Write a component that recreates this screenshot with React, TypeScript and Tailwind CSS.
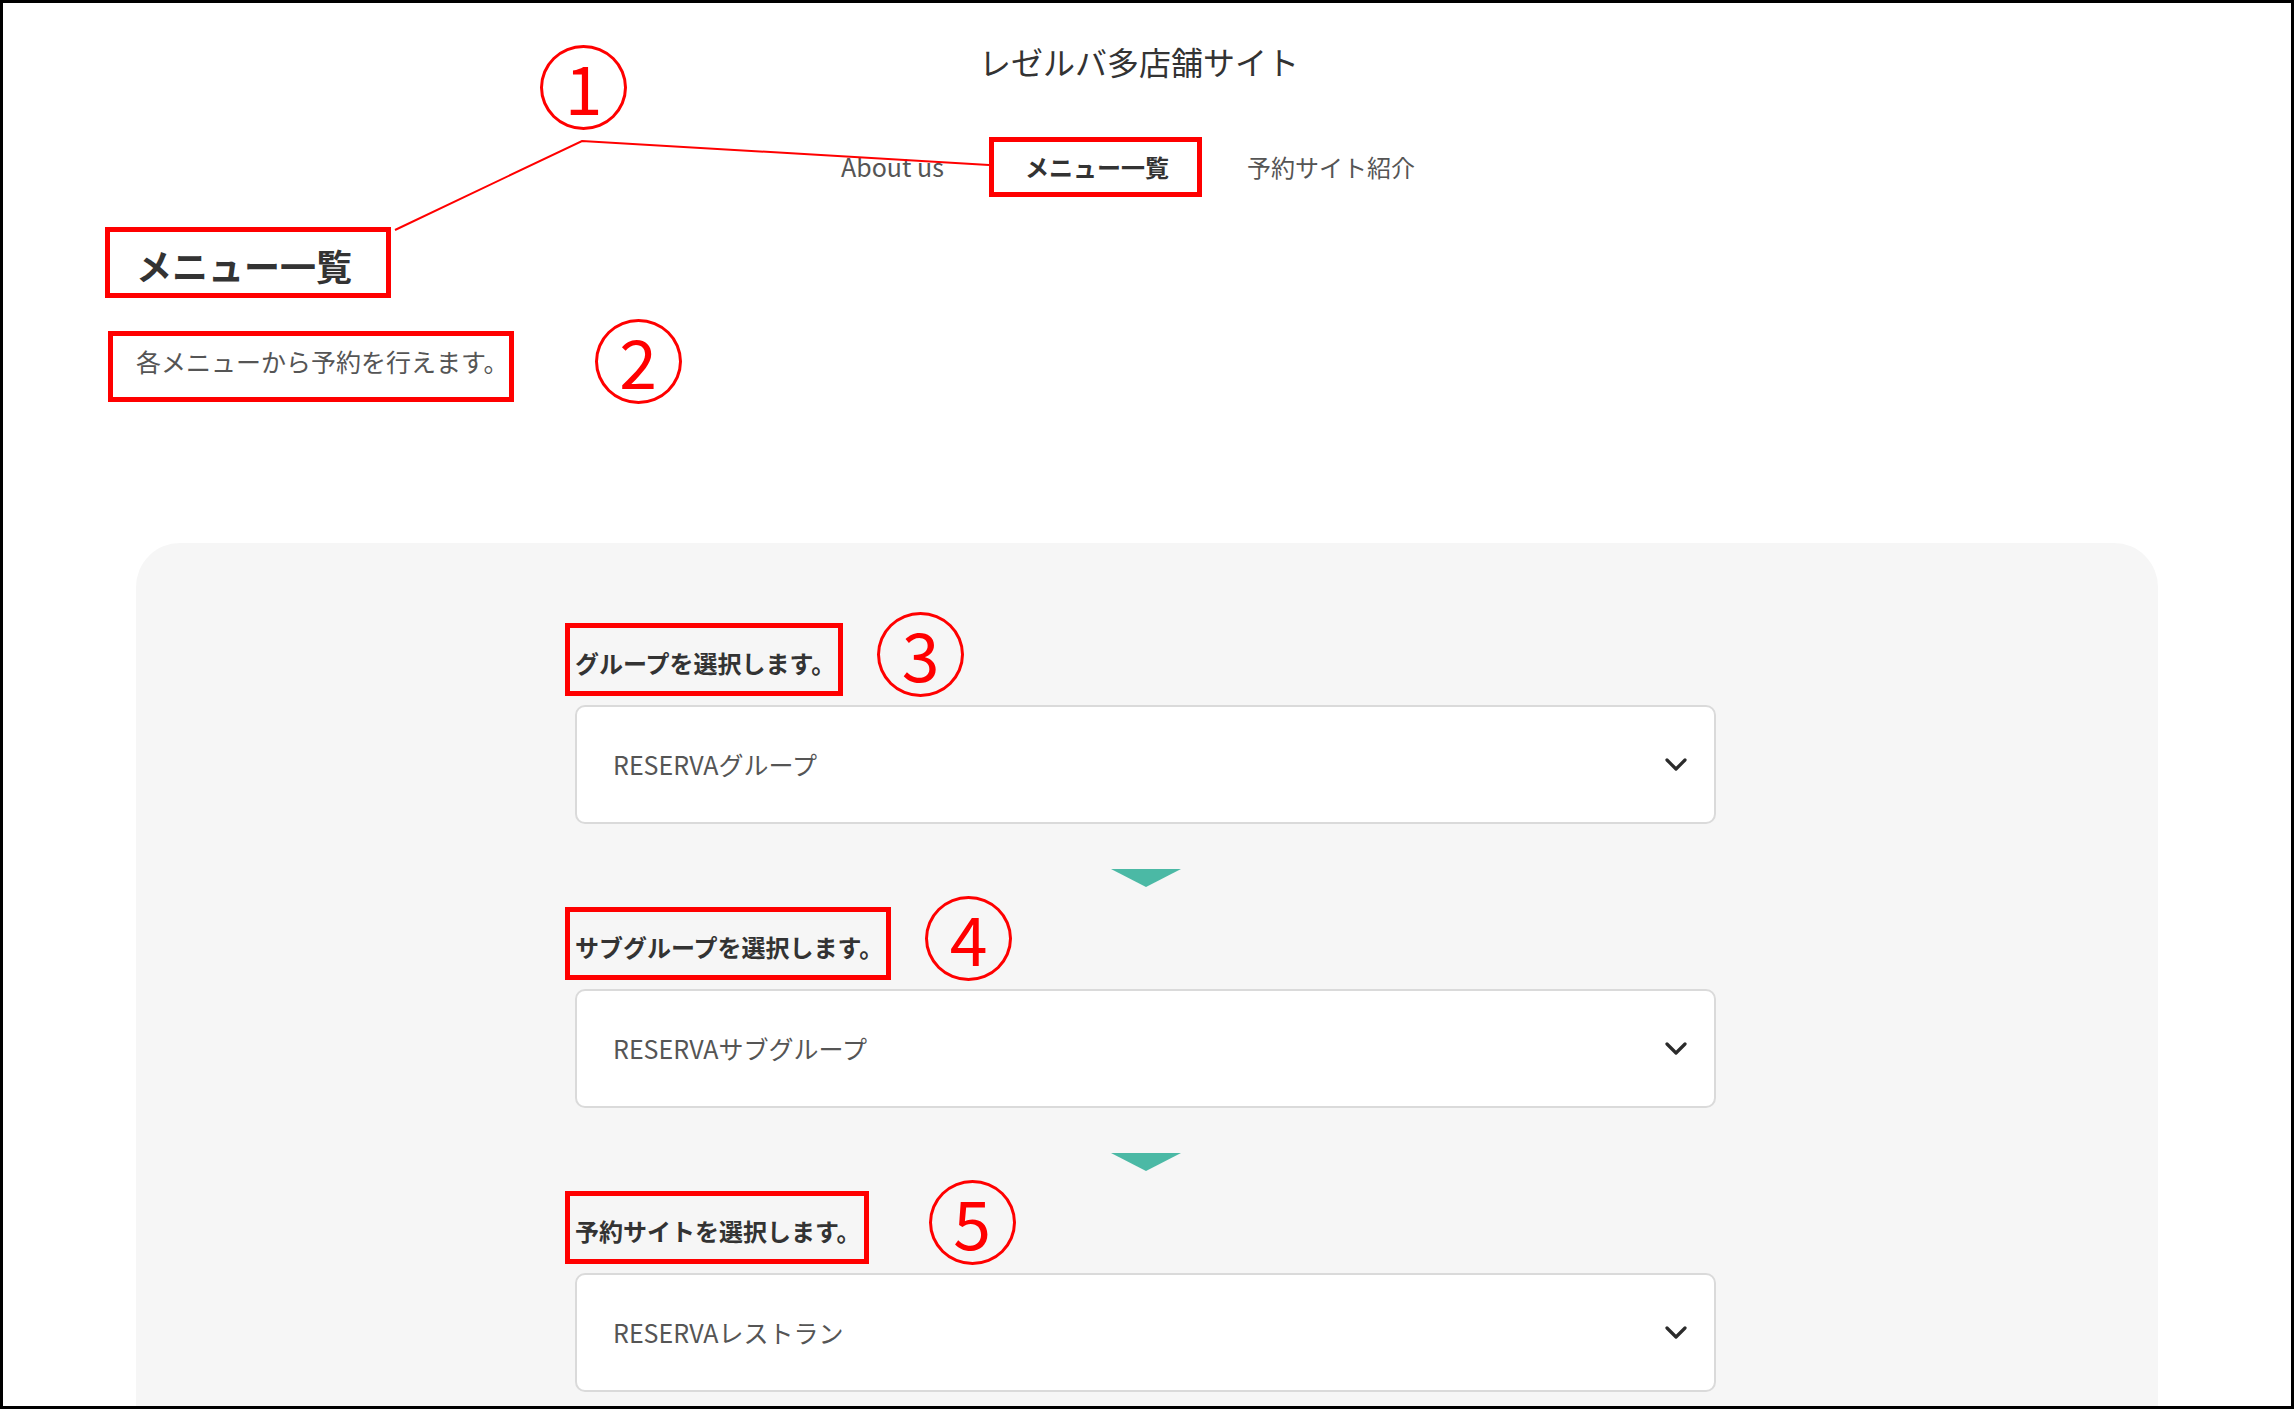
import React from 'react';

// Step rows inside the gray selection panel
const steps = [
    { label: 'グループを選択します。', value: 'RESERVAグループ', no: '3', gap: 'ml-[34px]' },
    { label: 'サブグループを選択します。', value: 'RESERVAサブグループ', no: '4', gap: 'ml-[34px]' },
    { label: '予約サイトを選択します。', value: 'RESERVAレストラン', no: '5', gap: 'ml-[60px]' },
];

// Hand-drawn style circled number used as a callout marker
const Circled = ({ n, className = '' }: { n: string; className?: string }) => (
    <div
        className={`flex h-[85px] w-[87px] shrink-0 items-center justify-center rounded-[50%] border-[3px] border-[#ff0000] text-[68px] leading-none text-[#ff0000] ${className}`}
    >
        <span className="-mt-[4px]">{n}</span>
    </div>
);

const Chevron = () => (
    <svg width="22" height="14" viewBox="0 0 22 14" fill="none">
        <polyline points="2,2 11,11 20,2" stroke="#2b2b2b" strokeWidth="3.2" strokeLinecap="round" strokeLinejoin="round" />
    </svg>
);

const Step = ({ label, value, no, gap, last }: { label: string; value: string; no: string; gap: string; last: boolean }) => (
    <div className="flex flex-col">
        <div className="flex items-center">
            <div className="-ml-[10px] flex h-[73px] items-center border-[5px] border-[#ff0000] pl-[5px] pr-[3px] pt-[6px]">
                <span className="text-[24px] font-bold leading-none text-[#333]">{label}</span>
            </div>
            <Circled n={no} className={`${gap} -my-[6px] -translate-y-[5px]`} />
        </div>
        <div className="mt-[9px] flex h-[119px] w-full items-center justify-between rounded-[10px] border-2 border-[#dadada] bg-white pl-[36px] pr-[27px]">
            <span className="text-[25px] leading-none text-[#555]">{value}</span>
            <Chevron />
        </div>
        {!last && (
            <div className="mx-auto mb-[20px] mt-[45px] h-0 w-0 border-l-[35px] border-r-[35px] border-t-[18px] border-l-transparent border-r-transparent border-t-[#4bb9a5]" />
        )}
    </div>
);

const App = () => {
    return (
        <div className="relative h-[1409px] w-[2294px] overflow-hidden border-[3px] border-black bg-white font-['Noto_Sans_CJK_JP',sans-serif]">
            {/* header */}
            <div className="pr-[16px] pt-[34px] text-center text-[32px] leading-[48px] text-[#333]">レゼルバ多店舗サイト</div>
            <nav className="mt-[50px] flex h-[60px] items-center justify-center gap-[45px] pr-[38px] pt-[3px] text-[24px] leading-none">
                <span className="text-[25px] text-[#555]">About us</span>
                <span className="flex h-[60px] items-center border-[5px] border-[#ff0000] pl-[31px] pr-[28px] font-bold text-[#333]">
                    メニュー一覧
                </span>
                <span className="text-[#555]">予約サイト紹介</span>
            </nav>

            {/* page heading */}
            <div className="ml-[102px] mt-[32px] flex">
                <h1 className="flex h-[71px] items-center border-[5px] border-[#ff0000] pl-[26px] pr-[34px] pt-[5px] text-[36px] font-bold leading-none text-[#333]">
                    メニュー一覧
                </h1>
            </div>
            <div className="ml-[105px] mt-[33px] flex items-center">
                <p className="flex h-[71px] items-center border-[5px] border-[#ff0000] pb-[10px] pl-[23px] pr-0 text-[25px] leading-none text-[#555]">
                    各メニューから予約を行えます。
                </p>
                <Circled n="2" className="-my-[7px] ml-[81px] -translate-y-[5px]" />
            </div>

            {/* selection panel */}
            <section className="mx-auto mt-[141px] w-[2022px] rounded-t-[44px] bg-[#f6f6f6] pb-[40px] pr-[3px] pt-[80px]">
                <div className="mx-auto w-[1141px]">
                    {steps.map((s, i) => (
                        <Step key={s.no} {...s} last={i === steps.length - 1} />
                    ))}
                </div>
            </section>

            {/* callout 1 with leader lines */}
            <svg className="pointer-events-none absolute left-0 top-0" width="2288" height="1403">
                <polyline points="392,227 579,138 986,162" fill="none" stroke="#ff0000" strokeWidth="2" />
            </svg>
            <Circled n="1" className="absolute left-[537px] top-[42px]" />
        </div>
    );
};

export default App;
